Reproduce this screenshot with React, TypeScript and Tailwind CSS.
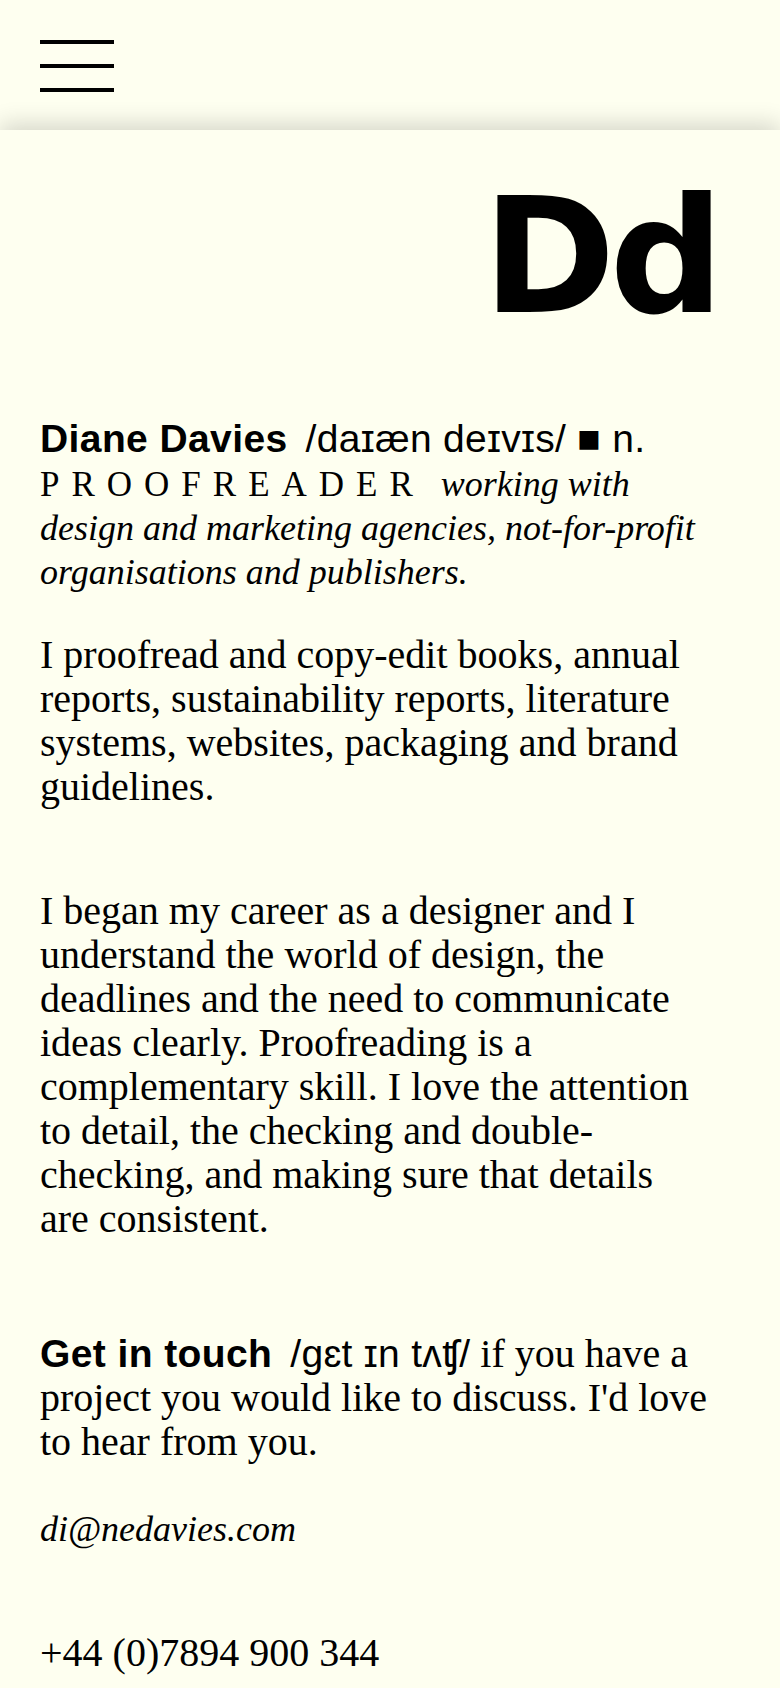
import React from 'react';

// font stacks, written out in full so Tailwind picks them up
const sans = "font-[family-name:'Liberation_Sans',Arial,'DejaVu_Sans',sans-serif]";
const serif = "font-[family-name:'Liberation_Serif','Times_New_Roman','DejaVu_Serif',serif]";
const display = "font-[family-name:'DejaVu_Sans','Liberation_Sans',sans-serif]";

function MenuButton() {
  return (
    <button aria-label="Open menu" className="flex w-[74px] flex-col gap-5">
      <span className="block h-1 w-full bg-black" />
      <span className="block h-1 w-full bg-black" />
      <span className="block h-1 w-full bg-black" />
    </button>
  );
}

export default function App() {
  return (
    <div className={`min-h-screen bg-[#fefff0] text-black ${serif}`}>
      <header className="px-10 pt-10 pb-[38px]">
        <MenuButton />
      </header>

      <main className="relative z-10 bg-[#fefff0] pl-10 pr-[76px] pt-[47px] pb-4 shadow-[0_-6px_22px_rgba(0,0,0,0.16)]">
        <div className={`${display} mr-[-14px] text-right text-[160px] font-bold leading-none tracking-[-6px]`}>Dd</div>

        <p className="mt-[80px] text-[40px] leading-[44px]">
          <span className={`${sans} text-[39px] font-bold leading-[40px] tracking-[0.4px]`}>Diane Davies</span>{' '}
          <span className={`${sans} ml-2 text-[39px] leading-[40px] tracking-[0.3px]`}>/daɪæn deɪvɪs/ ■ n.</span>{' '}
          <span className="text-[35px] leading-[40px] tracking-[12px]">PROOFREADER</span>{' '}
          <span className="ml-1.5 text-[36px] italic leading-[40px]">
            working with design and marketing agencies, not-for-profit organisations and publishers.
          </span>
        </p>

        <p className="mt-10 text-[40px] leading-[44px]">
          I proofread and copy-edit books, annual reports, sustainability reports, literature systems,
          websites, packaging and brand guidelines.
        </p>

        <p className="mt-20 text-[40px] leading-[44px]">
          I began my career as a designer and I understand the world of design, the deadlines and the
          need to communicate ideas clearly. Proofreading is a complementary skill. I love the attention
          to detail, the checking and double-checking, and making sure that details are consistent.
        </p>

        <p className="mt-[91px] mr-[-14px] text-[40px] leading-[44px]">
          <span className={`${sans} text-[39px] font-bold leading-[40px] tracking-[0.4px]`}>Get in touch</span>{' '}
          <span className={`${sans} ml-2 text-[39px] leading-[40px] tracking-[0.3px]`}>/gɛt ɪn tʌʧ/</span> if you
          have a project you would like to discuss. I'd love to hear from you.
        </p>

        <p className="mt-[43px] text-[36px] italic leading-[44px]">
          <a href="mailto:di@nedavies.com">di@nedavies.com</a>
        </p>

        <p className="mt-20 text-[40px] leading-[44px]">+44 (0)7894 900 344</p>
      </main>
    </div>
  );
}
